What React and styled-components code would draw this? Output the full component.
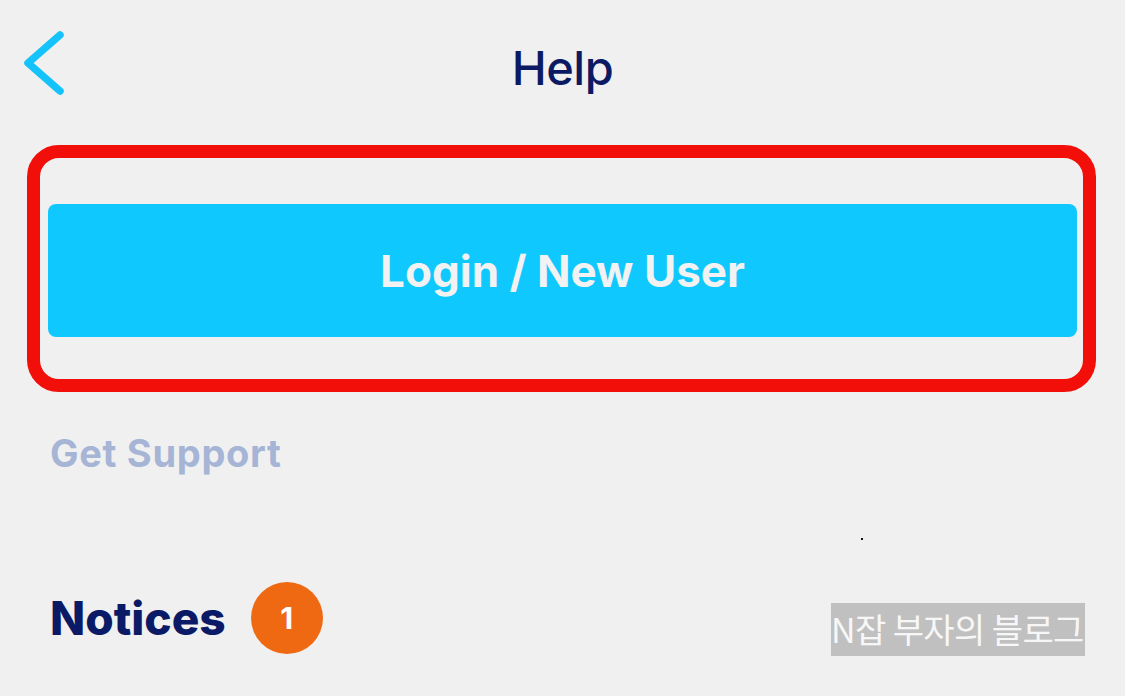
import React from "react";
import styled, { createGlobalStyle } from "styled-components";

const Global = createGlobalStyle`
  html, body { margin: 0; padding: 0; background: #f0f0f0; }
  body { font-family: Inter, "Noto Sans", "Liberation Sans", sans-serif; }
  * { box-sizing: border-box; }
`;

const Screen = styled.div`
  position: relative;
  width: 1125px;
  height: 696px;
  overflow: hidden;
  background: #f0f0f0;
  display: flex;
  flex-direction: column;
`;

const Header = styled.header`
  height: 145px;
  display: grid;
  grid-template-columns: 1fr auto 1fr;
  align-items: start;
`;

const BackButton = styled.button`
  justify-self: start;
  margin: 29px 0 0 20px;
  padding: 0;
  border: none;
  background: none;
  width: 46px;
  height: 68px;
  display: flex;
  align-items: center;
  justify-content: center;
`;

const Title = styled.h1`
  margin: 38px 0 0;
  font-family: Inter, "Liberation Sans", sans-serif;
  font-size: 47px;
  font-weight: 500;
  color: #0c1a63;
  letter-spacing: -0.5px;
  line-height: 60px;
`;

const Frame = styled.div`
  margin-left: 27px;
  width: 1069px;
  height: 247px;
  border: 13px solid #f20f0a;
  border-radius: 32px;
  padding: 46px 6px 42px 8px;
`;

const PrimaryButton = styled.button`
  width: 100%;
  height: 100%;
  border: none;
  border-radius: 8px;
  background: #0fc8fe;
  color: #f2f2f2;
  font-family: Inter, "Liberation Sans", sans-serif;
  font-weight: 700;
  font-size: 44px;
  letter-spacing: 0px;
  padding: 0;
`;

const LinkText = styled.div`
  margin: 38px 0 0 50px;
  font-family: Inter, "Liberation Sans", sans-serif;
  font-weight: 700;
  font-size: 38px;
  line-height: 46px;
  letter-spacing: 0.7px;
  color: #a6b5d6;
`;

const SectionRow = styled.div`
  margin: 106px 0 0 50px;
  display: flex;
  align-items: center;
  gap: 25px;
`;

const SectionTitle = styled.h2`
  margin: 0;
  font-family: Inter, "Liberation Sans", sans-serif;
  font-weight: 800;
  font-size: 46px;
  line-height: 56px;
  color: #0b1a66;
`;

const Badge = styled.span`
  width: 72px;
  height: 72px;
  border-radius: 50%;
  background: #ef6912;
  color: #ffffff;
  display: flex;
  align-items: center;
  justify-content: center;
  font-family: Inter, "Liberation Sans", sans-serif;
  font-weight: 700;
  font-size: 30px;
`;

const Watermark = styled.div`
  position: absolute;
  left: 831px;
  top: 603px;
  width: 254px;
  height: 53px;
  background: #c0c0c0;
  color: #f7f7f7;
  font-family: "Noto Sans CJK KR", "Noto Sans", sans-serif;
  font-size: 34px;
  line-height: 52px;
  white-space: nowrap;
  overflow: hidden;
  letter-spacing: -0.6px;
`;

const Speck = styled.span`
  position: absolute;
  left: 861px;
  top: 538px;
  width: 2px;
  height: 2px;
  background: #111;
`;

export default function App() {
  return (
    <>
      <Global />
      <Screen>
        <Header>
          <BackButton aria-label="Back">
            <svg width="46" height="68" viewBox="0 0 46 68">
              <path
                d="M40 6 L8 34 L40 62"
                fill="none"
                stroke="#14c3fb"
                strokeWidth="7.5"
                strokeLinecap="round"
                strokeLinejoin="round"
              />
            </svg>
          </BackButton>
          <Title>Help</Title>
          <div />
        </Header>
        <Frame>
          <PrimaryButton>Login / New User</PrimaryButton>
        </Frame>
        <LinkText>Get Support</LinkText>
        <SectionRow>
          <SectionTitle>Notices</SectionTitle>
          <Badge>1</Badge>
        </SectionRow>
        <Speck />
        <Watermark>N잡 부자의 블로그</Watermark>
      </Screen>
    </>
  );
}
